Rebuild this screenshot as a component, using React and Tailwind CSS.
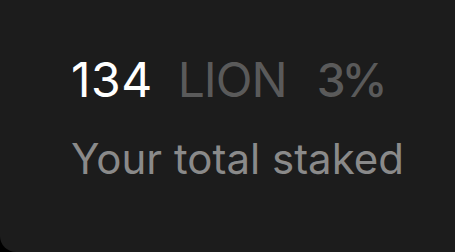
import React from 'react';

export default function App() {
  return (
    <div className="w-[455px] h-[252px] bg-black overflow-hidden">
      <div
        className="w-full h-full bg-[#1c1c1c] rounded-bl-2xl pl-[71px] pt-[56px]"
        style={{ fontFamily: 'Inter, "Noto Sans", sans-serif' }}
      >
        <div className="flex items-baseline leading-none">
          <span className="text-[48px] text-white tracking-[0.01em]">134</span>
          <span className="text-[48px] text-[#5a5a5a] ml-[25px] tracking-[-0.02em]">LION</span>
          <span className="text-[46px] font-medium text-[#5a5a5a] ml-[30px] tracking-[-0.08em]">3%</span>
        </div>
        <div className="mt-[34px] text-[42px] leading-none text-[#8a8a8a]">Your total staked</div>
      </div>
    </div>
  );
}
